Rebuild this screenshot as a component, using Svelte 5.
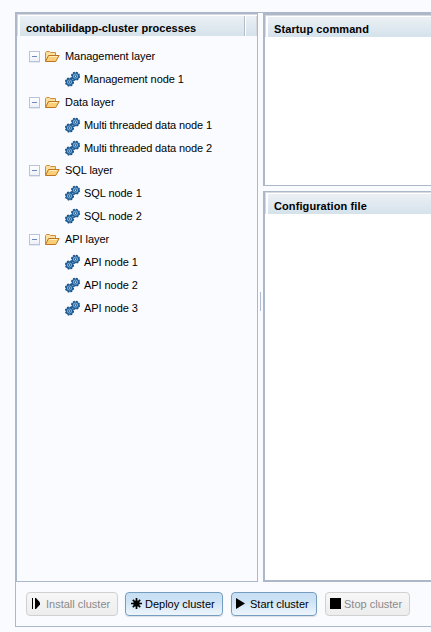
<script>
  const layers = [
    { name: 'Management layer', nodes: ['Management node 1'] },
    { name: 'Data layer', nodes: ['Multi threaded data node 1', 'Multi threaded data node 2'] },
    { name: 'SQL layer', nodes: ['SQL node 1', 'SQL node 2'] },
    { name: 'API layer', nodes: ['API node 1', 'API node 2', 'API node 3'] }
  ];
  const buttons = [
    { label: 'Install cluster', icon: 'install', width: 92, enabled: false },
    { label: 'Deploy cluster', icon: 'deploy', width: 98, enabled: true },
    { label: 'Start cluster', icon: 'start', width: 86, enabled: true },
    { label: 'Stop cluster', icon: 'stop', width: 85, enabled: false }
  ];
</script>

{#snippet gear(x, y)}
  <g transform="translate({x} {y})">
    <circle r="3.8" fill="none" stroke="#174a7c" stroke-width="1.5" stroke-dasharray="1.8 1.185" />
    <circle r="3.2" fill="#6fa9d8" stroke="#1d5c96" stroke-width="1.2" />
    <circle r="1.1" fill="#e4f1fb" stroke="#1d4f80" stroke-width=".9" />
  </g>
{/snippet}

<div class="app">
  <div class="frame">
    <div class="main">
      <section class="processes">
        <header class="head"><span class="title">contabilidapp-cluster processes</span><span class="cell"></span></header>
        <div class="tree">
          {#each layers as layer}
            <div class="layer">
              <div class="row">
                <span class="toggle"></span>
                <svg class="folder" width="16" height="13" viewBox="0 0 16 13">
                  <path d="M1.5 11V2.5L2.5 1.5H5.5L6.5 2.5H11.5V5" fill="#fbdf9f" stroke="#cf8d39" />
                  <path d="M1.5 11.5L4.5 5.5H15.2L11.7 11.5Z" fill="#fbcf78" stroke="#bd7420" stroke-linejoin="round" />
                  <path d="M5.2 6.5H13.3" stroke="#ffedbd" />
                </svg>
                <span>{layer.name}</span>
              </div>
              {#each layer.nodes as node}
                <div class="row node">
                  <svg class="gears" width="16" height="16" viewBox="0 0 16 16">
                    {@render gear(4.5, 11)}
                    {@render gear(10.5, 5.2)}
                  </svg>
                  <span class:long={node.length > 20}>{node}</span>
                </div>
              {/each}
            </div>
          {/each}
        </div>
      </section>
      <div class="splitter"><i></i></div>
      <div class="details">
        <section class="startup"><header class="head"><span class="title">Startup command</span></header></section>
        <section class="config"><header class="head"><span class="title">Configuration file</span></header></section>
      </div>
    </div>
    <footer>
      {#each buttons as b}
        <button class={b.icon} class:enabled={b.enabled} disabled={!b.enabled} style="width: {b.width}px">
          <svg width="12" height="12" viewBox="0 0 12 12">
            {#if b.icon === 'install'}
              <path d="M.5 0V11" stroke="#000" />
              <path d="M3 0H4L8 4.5V6.5L4 11H3Z" />
            {:else if b.icon === 'deploy'}
              <path d="M5.5 0V11M0 5.5H11M1.8 1.8L9.2 9.2M9.2 1.8L1.8 9.2" stroke="#000" stroke-width="1.7" />
              <circle cx="5.5" cy="5.5" r="3.1" />
            {:else if b.icon === 'start'}
              <path d="M0 0L9 5.5L0 11Z" />
            {:else}
              <path d="M0 0H11V11H0Z" />
            {/if}
          </svg>
          <span>{b.label}</span>
        </button>
      {/each}
    </footer>
  </div>
</div>

<style>
  :global(body) { background: #fafbfe; overflow: hidden; }
  .app {
    box-sizing: border-box;
    width: 431px;
    height: 632px;
    padding: 12px 0 5px 15px;
    overflow: hidden;
    background: #fafbfe;
    color: #000;
    font: 11px/14px "Liberation Sans", Arial, sans-serif;
  }
  .frame {
    box-sizing: border-box;
    height: 615px;
    border: solid #adb7ca;
    border-width: 1px 0 1px 1px;
    display: flex;
    flex-direction: column;
  }
  .main { display: flex; height: 569px; }
  section { box-sizing: border-box; border: 1px solid #adb7ca; }
  .processes { width: 242px; }
  .head {
    box-sizing: border-box;
    height: 22px;
    border: solid #fff;
    border-width: 2px 0 0 3px;
    background: linear-gradient(#ebf0f5, #d5e2eb) padding-box;
    display: flex;
    font-weight: bold;
    letter-spacing: 0.05px;
    position: relative;
  }
  .details .head { letter-spacing: 0.1px; }
  .head::before {
    content: "";
    position: absolute;
    inset: -2px 0 0 -3px;
    border: solid #d9dadf;
    border-width: 1px 0 0 1px;
  }
  .title { padding: 5px 0 0 6px; flex: 1; white-space: nowrap; }
  .cell { width: 11px; border-left: 1px solid #b4bcc6; box-shadow: inset 1px 0 #fff; border-right: 1px solid #d5d7dc; }
  .tree { padding-top: 8px; }
  .layer:nth-child(3) { margin-top: -1px; }
  .row { height: 23px; display: flex; align-items: center; padding-left: 12px; white-space: nowrap; letter-spacing: -0.06px; }
  .row.node { padding-left: 48px; }
  .long { letter-spacing: -0.11px; }
  .toggle {
    box-sizing: border-box;
    width: 11px;
    height: 11px;
    margin-top: 2px;
    border: 1px solid #b9c3dc;
    background: linear-gradient(#7189b8, #7189b8) center / 5px 1px no-repeat, linear-gradient(#fff, #edf1f8);
    box-shadow: 0 1px #e4e8f2;
  }
  .folder { margin: 2px 5px 0 4px; }
  .gears { margin-right: 3px; }
  .splitter { width: 5px; display: flex; align-items: center; justify-content: center; }
  .splitter i { width: 1px; height: 19px; background: #b0bccf; margin-top: 7px; }
  .details { flex: 1; display: flex; flex-direction: column; gap: 5px; }
  .details section { background: #fff; border-left-width: 2px; border-right: 0; }
  .startup { height: 173px; border-top-width: 2px; }
  .config { flex: 1; border-bottom-width: 2px; }
  footer { display: flex; padding: 10px 0 0 10px; }
  button {
    box-sizing: border-box;
    height: 24px;
    margin: 0 8px 0 0;
    padding: 0 0 1px 5px;
    border: 1px solid #d0d0d1;
    border-radius: 4px;
    background: linear-gradient(#f7f7f7, #ededed);
    color: #8a8a8c;
    font: inherit;
    display: flex;
    align-items: center;
    white-space: nowrap;
  }
  button.install { margin-right: 7px; }
  button.enabled { border-color: #759dc0; background: linear-gradient(#c7dff4, #cde2f5 35%, #edf5fc); color: #000; box-shadow: 0 1px 1px #d9dfe6; }
  button svg { margin-right: 2px; flex: none; }
  button.start, button.stop { padding-left: 4px; }
</style>
